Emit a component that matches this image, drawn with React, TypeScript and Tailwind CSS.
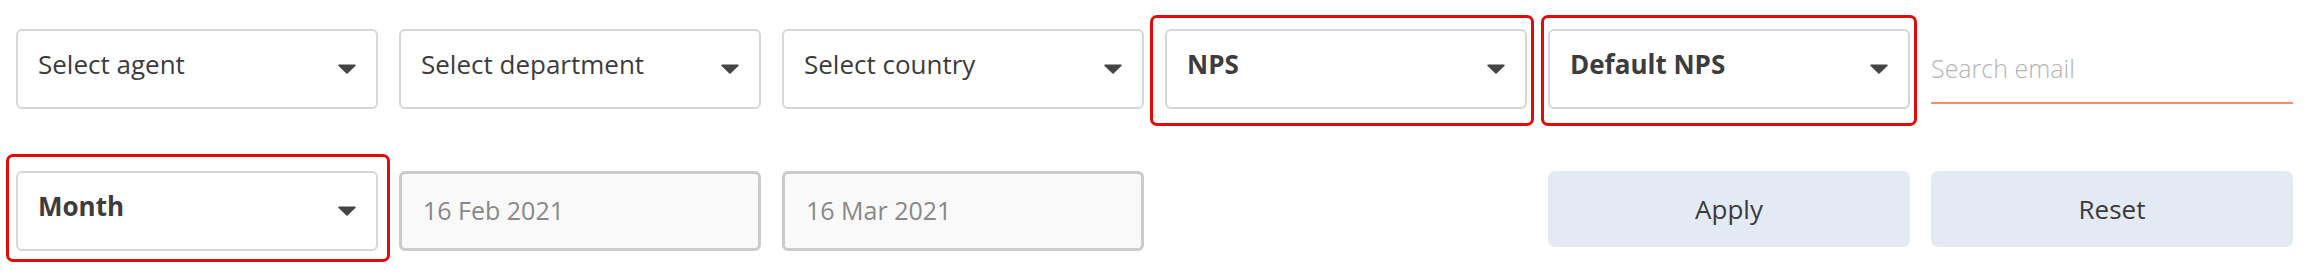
import type { ReactNode } from "react";

const font = { fontFamily: '"Open Sans", "Noto Sans", sans-serif' };

function Caret() {
  return (
    <svg width="18" height="10" viewBox="0 0 18 10" className="shrink-0">
      <path d="M1 0.5 H17 a0.8 0.8 0 0 1 0.6 1.3 L9.6 9.4 a0.8 0.8 0 0 1 -1.2 0 L0.4 1.8 A0.8 0.8 0 0 1 1 0.5 Z" fill="#444" />
    </svg>
  );
}

function Select({ label, bold }: { label: string; bold?: boolean }) {
  return (
    <div className="flex h-[80px] items-center justify-between rounded-[6px] border-2 border-[#d6d6da] bg-white pl-5 pr-[20px]">
      <span className={`mb-[10px] text-[26px] text-[#3c3c3c] ${bold ? "font-bold" : ""}`}>{label}</span>
      <Caret />
    </div>
  );
}

function Highlight({ children, cls }: { children: ReactNode; cls: string }) {
  return (
    <div className="relative">
      {children}
      <div className={`pointer-events-none absolute rounded-[7px] border-[3px] border-[#e10b0b] ${cls}`} />
    </div>
  );
}

function DateBox({ value }: { value: string }) {
  return (
    <div className="flex h-[80px] items-center rounded-[6px] border-[3px] border-[#cbcbcb] bg-[#f9f9f9] pl-[21px] text-[25px] text-[#888]">
      {value}
    </div>
  );
}

function Btn({ label }: { label: string }) {
  return (
    <button className="h-[76px] w-full rounded-[7px] bg-[#e4eaf3] text-[26px] text-[#3a3a3a]">
      {label}
    </button>
  );
}

export default function App() {
  return (
    <div style={font} className="h-[274px] w-[2308px] bg-white pl-4 pt-[29px]">
      <div className="grid grid-cols-[repeat(6,362px)] gap-x-[21px] gap-y-[62px]">
        <Select label="Select agent" />
        <Select label="Select department" />
        <Select label="Select country" />
        <Highlight cls="-left-[15px] -right-[7px] -top-[14px] -bottom-[17px]">
          <Select label="NPS" bold />
        </Highlight>
        <Highlight cls="-left-[7px] -right-[7px] -top-[14px] -bottom-[17px]">
          <Select label="Default NPS" bold />
        </Highlight>
        <div className="h-[75px] border-b-2 border-[#ff8a68]">
          <input
            placeholder="Search email"
            className="h-full w-full bg-transparent pt-[4px] text-[25px] font-light text-[#333] outline-none placeholder:text-[#b3b3b3]"
          />
        </div>

        <Highlight cls="-left-[10px] -right-[12px] -top-[17px] -bottom-[11px]">
          <Select label="Month" bold />
        </Highlight>
        <DateBox value="16 Feb 2021" />
        <DateBox value="16 Mar 2021" />
        <div />
        <Btn label="Apply" />
        <Btn label="Reset" />
      </div>
    </div>
  );
}
